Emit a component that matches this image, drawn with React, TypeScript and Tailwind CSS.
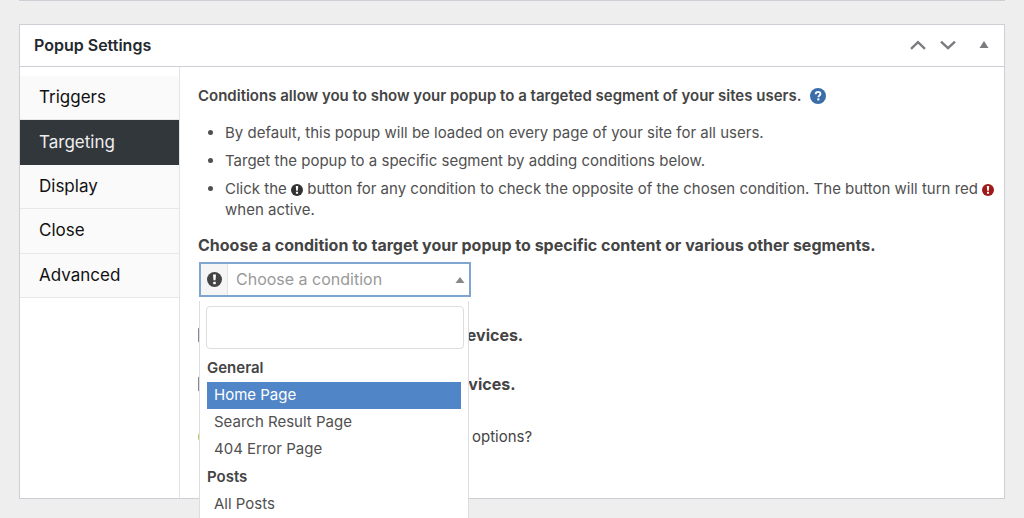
import { useState } from "react";

const tabs = ["Triggers", "Targeting", "Display", "Close", "Advanced"];

const conditionGroups = [
  { label: "General", options: ["Home Page", "Search Result Page", "404 Error Page"] },
  { label: "Posts", options: ["All Posts"] },
];

function ExclaimIcon({ className }: { className: string }) {
  return (
    <svg viewBox="0 0 16 16" className={className} aria-hidden="true">
      <circle cx="8" cy="8" r="8" fill="currentColor" />
      <path d="M6.4 2.6h3.2l-.5 6.3H6.9z" fill="white" />
      <rect x="6.6" y="10.3" width="2.8" height="2.7" rx=".5" fill="white" />
    </svg>
  );
}

function HelpIcon() {
  return (
    <svg viewBox="0 0 16 16" className="size-4" aria-hidden="true">
      <circle cx="8" cy="8" r="8" fill="currentColor" />
      <path d="M5.7 6.2c0-1.5 1-2.3 2.4-2.3s2.3.8 2.3 2c0 1.6-2 1.6-2 3.3" fill="none" stroke="white" strokeWidth="1.9" />
      <rect x="7.3" y="10.4" width="2.1" height="2" fill="white" />
    </svg>
  );
}

function PanelHeader() {
  return (
    <header className="flex h-[42px] items-center justify-between border-b border-[#ccd0d4] pr-[11px] pb-0.5 pl-3.5">
      <h2 className="text-base font-semibold text-[#23282d]">Popup Settings</h2>
      <div className="flex items-center text-[#7a7c7f]">
        <button type="button" aria-label="Move up" className="flex w-[30px] justify-center">
          <svg viewBox="0 0 16 10" className="h-2.5 w-4" fill="none" stroke="currentColor" strokeWidth="2.4">
            <path d="M1 8.8 8 2.2l7 6.6" />
          </svg>
        </button>
        <button type="button" aria-label="Move down" className="flex w-[30px] justify-center">
          <svg viewBox="0 0 16 10" className="h-2.5 w-4" fill="none" stroke="currentColor" strokeWidth="2.4">
            <path d="M1 1.6 8 8.2l7-6.6" />
          </svg>
        </button>
        <button type="button" aria-label="Toggle panel" className="ml-3 flex w-[18px] justify-center">
          <svg viewBox="0 0 10 8" className="h-2 w-2.5" fill="currentColor">
            <path d="M5 0 9.5 7H.5z" />
          </svg>
        </button>
      </div>
    </header>
  );
}

function TabList({ active, onSelect }: { active: string; onSelect: (tab: string) => void }) {
  return (
    <nav className="w-40 shrink-0 border-r border-[#e2e4e7] pt-[9px]">
      <div className="grid h-[222px] grid-rows-5">
        {tabs.map((tab) => (
          <button
            key={tab}
            type="button"
            onClick={() => onSelect(tab)}
            className={
              tab === active
                ? "bg-[#32373c] pl-[19px] text-left text-[17px] text-[#eeeeee]"
                : "border-b border-[#e8e8e8] bg-[#fafafa] pl-[19px] text-left text-[17px] text-[#111111]"
            }
          >
            {tab}
          </button>
        ))}
      </div>
    </nav>
  );
}

function ConditionMenu() {
  const [selected, setSelected] = useState("Home Page");
  return (
    <div className="absolute top-[39px] left-0 z-10 w-[270px] border-x border-[#dddddd] bg-white pt-[5px] pr-1 pb-2 pl-1.5">
      <input
        type="text"
        aria-label="Search conditions"
        className="block h-[43px] w-full rounded border border-[#dddddd] bg-white px-2 text-[15px] outline-none"
      />
      <div className="pt-[5px] pr-[3px] pl-px">
        {conditionGroups.map((group) => (
          <section key={group.label} aria-label={group.label}>
            <h4 className="flex h-7 items-center text-[15px] font-semibold text-[#444444]">{group.label}</h4>
            {group.options.map((option) => (
              <button
                key={option}
                type="button"
                onClick={() => setSelected(option)}
                className={
                  option === selected
                    ? "flex h-[27px] w-full items-center bg-[#5085c7] pl-[7px] text-[15px] text-white"
                    : "flex h-[27px] w-full items-center pl-[7px] text-[15px] text-[#505050]"
                }
              >
                {option}
              </button>
            ))}
          </section>
        ))}
      </div>
    </div>
  );
}

function ConditionPicker() {
  return (
    <div className="relative mt-[7px] ml-px w-[272px]">
      <div className="flex h-[35px] border-2 border-[#7ea6cf] bg-white">
        <button
          type="button"
          aria-label="Check the opposite of this condition"
          className="flex w-[27px] items-center justify-center border-r border-[#e2e2e2] bg-[#f5f5f5] text-[#444444]"
        >
          <ExclaimIcon className="size-[15px]" />
        </button>
        <select aria-label="Condition" className="min-w-0 flex-1 appearance-none bg-white pb-px pl-2 text-base text-[#999999] outline-none">
          <option>Choose a condition</option>
        </select>
        <svg viewBox="0 0 10 6" className="mr-1 h-1.5 w-2.5 self-center text-[#888888]" fill="currentColor" aria-hidden="true">
          <path d="M5 0 9.5 6H.5z" />
        </svg>
      </div>
      <ConditionMenu />
    </div>
  );
}

function DeviceToggle({ id, label }: { id: string; label: string }) {
  return (
    <div className="flex h-[49px] items-center gap-3.5">
      <input id={id} type="checkbox" className="size-4 appearance-none rounded-xs border border-[#7e8993] bg-white" />
      <label htmlFor={id} className="text-base font-bold text-[#444444]">
        {label}
      </label>
    </div>
  );
}

function TargetingPanel() {
  return (
    <div className="min-w-0 flex-1 pt-[19px] pb-[51px] pl-[18px] text-[15px] text-[#444444]">
      <div className="flex h-5 items-center gap-2">
        <p className="font-semibold">Conditions allow you to show your popup to a targeted segment of your sites users.</p>
        <a href="#conditions-help" aria-label="Help" className="text-[#3a6ea8]">
          <HelpIcon />
        </a>
      </div>
      <ul className="mt-4 list-disc space-y-[7px] pl-[27px] leading-[21px] text-[#505050]">
        <li>By default, this popup will be loaded on every page of your site for all users.</li>
        <li>Target the popup to a specific segment by adding conditions below.</li>
        <li>
          Click the <ExclaimIcon className="inline size-3 text-[#333333]" /> button for any condition to check the opposite of the
          chosen condition. The button will turn red <ExclaimIcon className="inline size-3 text-[#a01818]" /> when active.
        </li>
      </ul>
      <h3 className="mt-[15px] text-base leading-5 font-bold">
        Choose a condition to target your popup to specific content or various other segments.
      </h3>
      <ConditionPicker />
      <div className="mt-[13px]">
        <DeviceToggle id="mobile" label="Disable this popup on mobile devices." />
        <DeviceToggle id="tablet" label="Disable this popup on tablet devices." />
      </div>
      <p className="mt-[19px] flex h-5 items-center gap-1">
        <span className="size-4 rounded-full bg-[#b5bd4c]" />
        Need any more advanced targeting options?
      </p>
    </div>
  );
}

export default function App() {
  const [active, setActive] = useState("Targeting");
  return (
    <main className="min-h-screen overflow-hidden bg-[#eeeeee] px-[19px] font-[Inter,sans-serif]">
      <div className="h-px bg-[#ccd0d4]" />
      <section className="mt-[23px] border border-[#ccd0d4] bg-white">
        <PanelHeader />
        <div className="flex">
          <TabList active={active} onSelect={setActive} />
          <TargetingPanel />
        </div>
      </section>
    </main>
  );
}
